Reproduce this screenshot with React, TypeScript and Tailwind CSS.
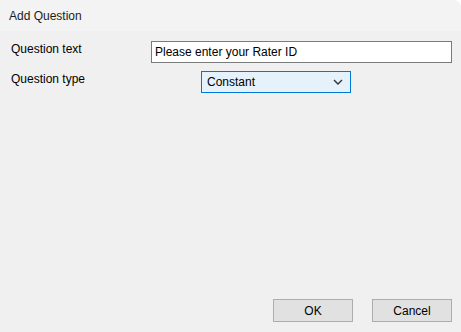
import React from 'react';

function Chevron() {
  return (
    <svg width="10" height="6" viewBox="0 0 10 6" className="text-[#333]">
      <path d="M1 1l4 4 4-4" fill="none" stroke="currentColor" strokeWidth="1.4" />
    </svg>
  );
}

export default function App() {
  return (
    <div
      className="w-[461px] h-[332px] flex flex-col bg-[#f0f0f0] text-[12px] text-black rounded-tr-[8px] overflow-hidden"
      style={{ fontFamily: '"Liberation Sans", Arial, sans-serif' }}
    >
      <div className="h-[31px] bg-[#f3f3f3] flex items-center pl-[9px] text-[#1b1b1b]">Add Question</div>

      <div className="flex-1 flex flex-col pl-[11px] pt-[10px]">
        <div className="flex items-start h-[22px]">
          <span className="w-[140px] leading-[16px]">Question text</span>
          <div className="w-[301px] h-[22px] bg-white border border-[#7a7a7a] flex items-center pl-[3px]">
            Please enter your Rater ID
          </div>
        </div>

        <div className="flex items-start h-[22px] mt-[8px]">
          <span className="w-[190px] leading-[16px]">Question type</span>
          <div className="w-[150px] h-[22px] bg-[#e5f1fb] border border-[#0078d7] flex items-center justify-between pl-[5px] pr-[7px]">
            <span>Constant</span>
            <Chevron />
          </div>
        </div>
      </div>

      <div className="flex justify-end gap-[19px] pr-[9px] pb-[10px]">
        <button className="w-[80px] h-[23px] bg-[#e1e1e1] border border-[#adadad] text-[12px]">OK</button>
        <button className="w-[80px] h-[23px] bg-[#e1e1e1] border border-[#adadad] text-[12px]">Cancel</button>
      </div>
    </div>
  );
}
